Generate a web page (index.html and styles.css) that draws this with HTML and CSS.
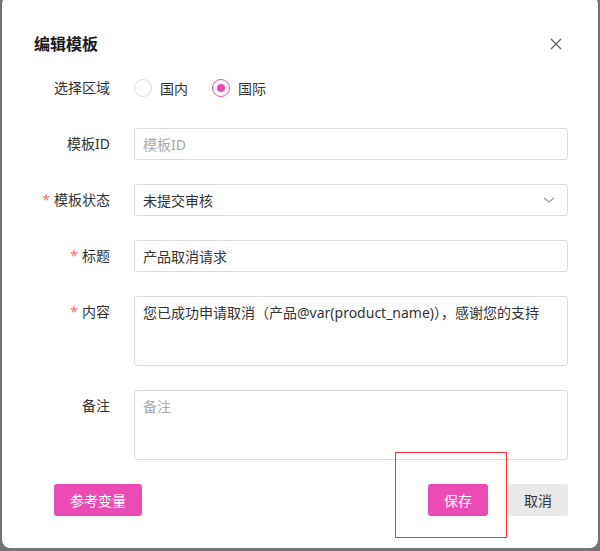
FILE: index.html
```html
<!DOCTYPE html>
<html lang="zh-CN">
<head>
    <meta charset="UTF-8">
    <meta name="viewport" content="width=device-width, initial-scale=1.0">
    <title>编辑模板</title>
    <link rel="stylesheet" href="styles.css">
</head>
<body>
    <div class="dialog">
        <div class="dialog-header">
            <span class="dialog-title">编辑模板</span>
            <button class="close-btn" aria-label="关闭">
                <svg width="12" height="12" viewBox="0 0 12 12">
                    <path d="M1 1L11 11M11 1L1 11" stroke="#666" stroke-width="1.4" fill="none"/>
                </svg>
            </button>
        </div>

        <div class="form">
            <div class="form-row">
                <div class="form-label">选择区域</div>
                <div class="form-field radios">
                    <label class="radio"><span class="radio-circle"></span>国内</label>
                    <label class="radio checked"><span class="radio-circle"></span>国际</label>
                </div>
            </div>
            <div class="form-row">
                <div class="form-label">模板ID</div>
                <div class="form-field">
                    <input class="input" type="text" placeholder="模板ID">
                </div>
            </div>
            <div class="form-row">
                <div class="form-label required">模板状态</div>
                <div class="form-field">
                    <div class="select">
                        <span>未提交审核</span>
                        <svg width="12" height="8" viewBox="0 0 12 8">
                            <path d="M1 2L6 6L11 2" stroke="#999" stroke-width="1.1" fill="none"/>
                        </svg>
                    </div>
                </div>
            </div>
            <div class="form-row">
                <div class="form-label required">标题</div>
                <div class="form-field">
                    <input class="input" type="text" value="产品取消请求">
                </div>
            </div>
            <div class="form-row">
                <div class="form-label required">内容</div>
                <div class="form-field">
                    <textarea class="textarea">您已成功申请取消（产品@var(product_name)），感谢您的支持</textarea>
                </div>
            </div>
            <div class="form-row">
                <div class="form-label">备注</div>
                <div class="form-field">
                    <textarea class="textarea" placeholder="备注"></textarea>
                </div>
            </div>
        </div>

        <div class="dialog-footer">
            <button class="btn btn-primary btn-vars">参考变量</button>
            <div class="footer-actions">
                <button class="btn btn-primary">保存</button>
                <button class="btn btn-default">取消</button>
            </div>
        </div>
    </div>
    <div class="highlight"></div>
</body>
</html>
```

FILE: styles.css
```css
* {
    box-sizing: border-box;
}

body {
    margin: 0;
    padding: 0;
    background: #747474;
    font-family: "Noto Sans", "Noto Sans CJK SC", sans-serif;
    font-size: 14px;
    color: #333;
    height: 551px;
    overflow: hidden;
    position: relative;
}

.dialog {
    width: 596px;
    margin: -4px 0 0 2px;
    padding: 36px 30px 32px 32px;
    background: #fff;
    border-radius: 8px;
}

.dialog-header {
    display: flex;
    justify-content: space-between;
    align-items: center;
    height: 24px;
    margin-bottom: 16px;
}

.dialog-title {
    font-size: 16px;
    font-weight: bold;
    color: #1a1a1a;
    line-height: 24px;
}

.close-btn {
    width: 24px;
    height: 24px;
    padding: 0;
    border: none;
    background: none;
    display: flex;
    align-items: center;
    justify-content: center;
    cursor: pointer;
}

.form-row {
    display: flex;
    margin-bottom: 24px;
}

.form-label {
    width: 100px;
    flex-shrink: 0;
    padding-right: 24px;
    text-align: right;
    line-height: 32px;
    color: #333;
}

.form-label.required::before {
    content: '*';
    color: #f56c6c;
    margin-right: 4px;
}

.form-field {
    flex: 1;
}

.radios {
    display: flex;
    align-items: center;
    gap: 24px;
    height: 32px;
}

.radio {
    display: flex;
    align-items: center;
    gap: 8px;
    cursor: pointer;
}

.radio-circle {
    width: 18px;
    height: 18px;
    border: 1px solid #dcdcdc;
    border-radius: 50%;
    display: flex;
    align-items: center;
    justify-content: center;
}

.radio.checked .radio-circle {
    border-color: #ec4bb6;
}

.radio.checked .radio-circle::after {
    content: '';
    width: 8px;
    height: 8px;
    border-radius: 50%;
    background: #ec4bb6;
}

.input,
.select,
.textarea {
    width: 100%;
    border: 1px solid #dcdcdc;
    border-radius: 3px;
    font-family: inherit;
    font-size: 14px;
    color: #333;
    background: #fff;
    outline: none;
}

.input {
    height: 32px;
    padding: 0 8px;
}

.input::placeholder,
.textarea::placeholder {
    color: #aaa;
}

.select {
    height: 32px;
    padding: 0 12px 0 8px;
    display: flex;
    align-items: center;
    justify-content: space-between;
}

.textarea {
    display: block;
    height: 70px;
    padding: 6px 8px;
    line-height: 20px;
    resize: none;
}

.dialog-footer {
    display: flex;
    justify-content: space-between;
    align-items: center;
}

.btn-vars {
    margin-left: 20px;
}

.footer-actions {
    display: flex;
    gap: 20px;
}

.btn {
    height: 32px;
    padding: 0 16px;
    border: none;
    border-radius: 3px;
    font-family: inherit;
    font-size: 14px;
    cursor: pointer;
}

.footer-actions .btn {
    width: 60px;
    padding: 0;
}

.btn-primary {
    background: #ec4bb6;
    color: #fff;
}

.btn-default {
    background: #e9e9e9;
    color: #333;
}

.highlight {
    position: absolute;
    left: 395px;
    top: 452px;
    width: 112px;
    height: 86px;
    border: 1px solid #f33;
}
```
